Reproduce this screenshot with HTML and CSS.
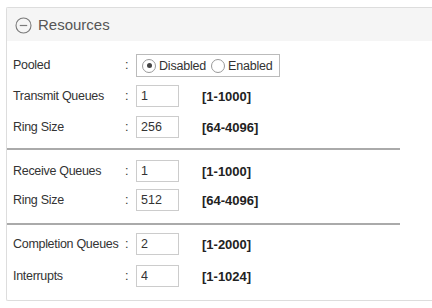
FILE: index.html
```html
<!DOCTYPE html>
<html lang="en">
<head>
    <meta charset="UTF-8">
    <meta name="viewport" content="width=device-width, initial-scale=1.0">
    <title>Resources</title>
    <link rel="stylesheet" href="styles.css">
</head>
<body>
    <div class="panel">
        <div class="panel-header">
            <svg class="toggle" width="17" height="17" viewBox="0 0 17 17">
                <circle cx="8.5" cy="8.5" r="7.5" fill="none" stroke="#7a7a7a" stroke-width="1.1"/>
                <line x1="4.8" y1="8.5" x2="12.2" y2="8.5" stroke="#7a7a7a" stroke-width="1.2"/>
            </svg>
            <span>Resources</span>
        </div>

        <div class="group first">
            <div class="row">
                <label>Pooled</label>
                <span class="colon">:</span>
                <div class="radio-box">
                    <span class="radio checked"></span>
                    <span class="radio-text">Disabled</span>
                    <span class="radio"></span>
                    <span class="radio-text">Enabled</span>
                </div>
            </div>
            <div class="row">
                <label>Transmit Queues</label>
                <span class="colon">:</span>
                <input type="text" value="1">
                <span class="range">[1-1000]</span>
            </div>
            <div class="row">
                <label>Ring Size</label>
                <span class="colon">:</span>
                <input type="text" value="256">
                <span class="range">[64-4096]</span>
            </div>
        </div>

        <div class="group second">
            <div class="row">
                <label>Receive Queues</label>
                <span class="colon">:</span>
                <input type="text" value="1">
                <span class="range">[1-1000]</span>
            </div>
            <div class="row">
                <label>Ring Size</label>
                <span class="colon">:</span>
                <input type="text" value="512">
                <span class="range">[64-4096]</span>
            </div>
        </div>

        <div class="group third">
            <div class="row">
                <label>Completion Queues</label>
                <span class="colon">:</span>
                <input type="text" value="2">
                <span class="range">[1-2000]</span>
            </div>
            <div class="row">
                <label>Interrupts</label>
                <span class="colon">:</span>
                <input type="text" value="4">
                <span class="range">[1-1024]</span>
            </div>
        </div>
    </div>
</body>
</html>
```

FILE: styles.css
```css
body {
    margin: 0;
    font-family: "Liberation Sans", Arial, sans-serif;
    font-size: 12.5px;
    color: #333;
    background: #fff;
}
.panel {
    margin: 7px 0 0 6px;
    border: 1px solid #ddd;
    border-right: none;
    border-radius: 2px 0 0 2px;
    background: #fff;
}
.panel-header {
    display: flex;
    align-items: center;
    height: 33px;
    padding-left: 8px;
    background: #f5f5f5;
    color: #555;
    font-size: 15px;
}
.toggle {
    margin-right: 6px;
    margin-top: 1px;
}
.group {
    width: 393px;
    display: flex;
    flex-direction: column;
}
.group.first {
    padding: 13px 0 10px;
    gap: 9px;
    border-bottom: 2px solid #aaa;
}
.group.second {
    padding: 10px 0 12px;
    gap: 7px;
    border-bottom: 2px solid #aaa;
}
.group.third {
    padding: 8px 0 13px;
    gap: 10px;
}
.row {
    display: flex;
    align-items: center;
    height: 22px;
    padding-left: 6px;
    white-space: nowrap;
}
.row label {
    width: 112px;
    letter-spacing: -0.3px;
}
.colon {
    width: 11px;
}
.row input {
    width: 33px;
    height: 20px;
    margin: 0;
    padding: 0 4px;
    border: 1px solid #ccc;
    font-family: inherit;
    font-size: 12.5px;
    color: #333;
    outline: none;
}
.range {
    margin-left: 23px;
    font-weight: bold;
    font-size: 13px;
    color: #222;
}
.radio-box {
    display: flex;
    align-items: center;
    height: 21px;
    padding: 0 6px 0 5px;
    border: 1px solid #bbb;
    margin-top: 1px;
    letter-spacing: -0.2px;
}
.radio {
    width: 12px;
    height: 12px;
    border: 1px solid #999;
    border-radius: 50%;
    position: relative;
    margin-right: 3px;
}
.radio.checked::after {
    content: "";
    position: absolute;
    left: 3.5px;
    top: 3.5px;
    width: 5px;
    height: 5px;
    border-radius: 50%;
    background: #444;
}
.radio-text {
    margin-right: 5px;
}
.radio-text:last-child {
    margin-right: 0;
}
```
